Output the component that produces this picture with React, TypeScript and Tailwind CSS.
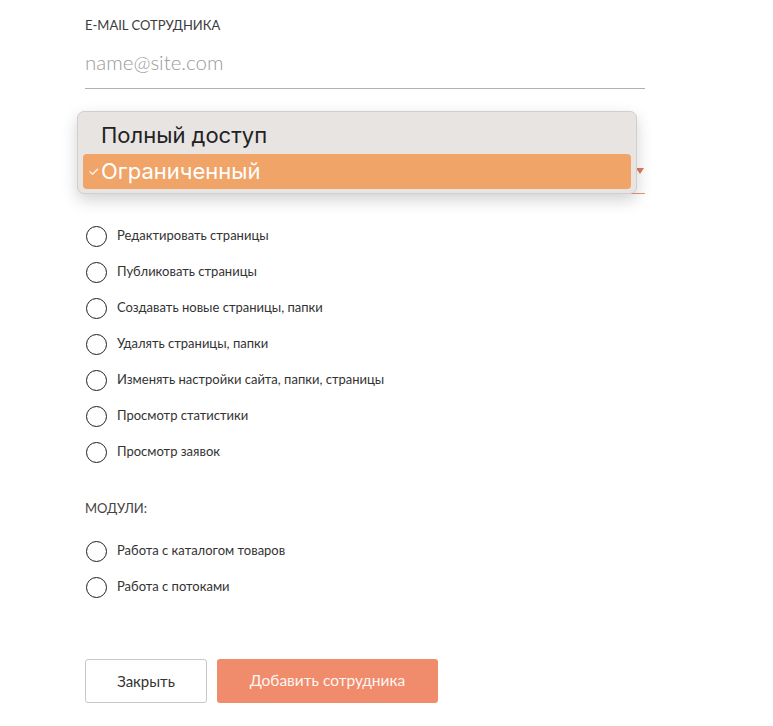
import React from 'react';

const permissions = [
  'Редактировать страницы',
  'Публиковать страницы',
  'Создавать новые страницы, папки',
  'Удалять страницы, папки',
  'Изменять настройки сайта, папки, страницы',
  'Просмотр статистики',
  'Просмотр заявок',
];

const modules = ['Работа с каталогом товаров', 'Работа с потоками'];

function Check({ label }: { label: string }) {
  return (
    <label className="flex items-center h-[36px] gap-[10px] pl-px cursor-pointer">
      <span className="w-[21px] h-[21px] rounded-full border-[1.5px] border-[#1e1e1e] shrink-0" />
      <span className="text-[13px] text-[#333]">{label}</span>
    </label>
  );
}

export default function App() {
  return (
    <div className="min-h-[726px] bg-white font-['Lato','Liberation_Sans',sans-serif]">
      <div className="pl-[85px] w-[645px]">
        <div className="pt-[17px] text-[13px] leading-[16px] text-[#3c3c3c] uppercase">E-mail сотрудника</div>
        <div className="mt-[17px] h-[39px] border-b border-[#b0b0b0] text-[20.5px] leading-[24px] font-light text-[#9a9a9a]">
          name@site.com
        </div>

        <div className="relative h-[105px] border-b border-[#e8917a]">
          <span className="absolute right-px top-[79px] w-0 h-0 border-l-[4px] border-r-[4px] border-t-[6px] border-l-transparent border-r-transparent border-t-[#e07a5f]" />
          <div className="absolute left-[-8px] top-[22px] w-[560px] h-[83px] p-[5px] rounded-[7px] bg-[#e8e4e2] border border-[#d2cecc] shadow-[0_6px_16px_rgba(0,0,0,0.18)] font-['Inter','Roboto',sans-serif] text-[22px]">
            <div className="h-[37px] flex items-center pl-[18px] text-[#222]">Полный доступ</div>
            <div className="h-[35px] flex items-center rounded-[4px] bg-[#f0a467] text-white relative pl-[18px]">
              <span className="absolute left-[5px] text-[13px]">✓</span>
              Ограниченный
            </div>
          </div>
        </div>

        <div className="mt-[24px]">
          {permissions.map((p) => (
            <Check key={p} label={p} />
          ))}
        </div>

        <div className="mt-[30px] text-[13px] leading-[16px] text-[#444]">МОДУЛИ:</div>
        <div className="mt-[17px]">
          {modules.map((m) => (
            <Check key={m} label={m} />
          ))}
        </div>

        <div className="mt-[54px] flex gap-[10px]">
          <button className="w-[122px] h-[44px] rounded-[3px] border border-[#c8c8c8] bg-white text-[15px] text-[#333]">
            Закрыть
          </button>
          <button className="w-[221px] h-[44px] rounded-[3px] bg-[#f08b6c] text-[15.5px] text-[#fff6f2]">
            Добавить сотрудника
          </button>
        </div>
      </div>
    </div>
  );
}
